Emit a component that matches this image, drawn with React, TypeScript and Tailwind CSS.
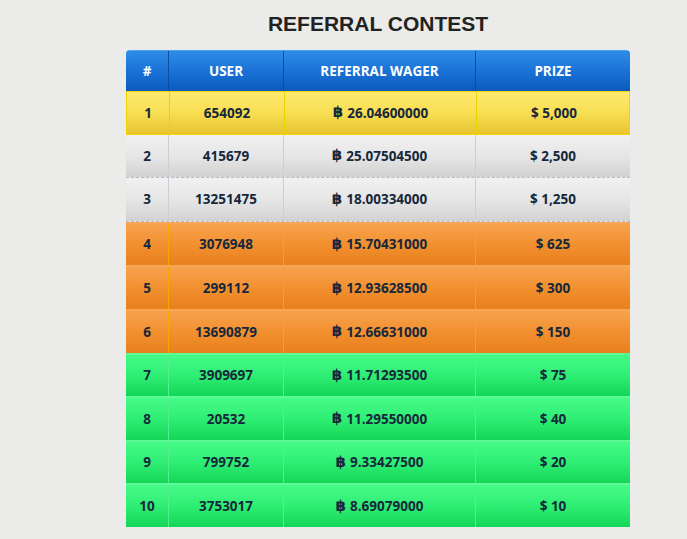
const rows = [
  { rank: 1, user: '654092', wager: '26.04600000', prize: '$ 5,000', tier: 'gold' },
  { rank: 2, user: '415679', wager: '25.07504500', prize: '$ 2,500', tier: 'silver' },
  { rank: 3, user: '13251475', wager: '18.00334000', prize: '$ 1,250', tier: 'silver' },
  { rank: 4, user: '3076948', wager: '15.70431000', prize: '$ 625', tier: 'orange' },
  { rank: 5, user: '299112', wager: '12.93628500', prize: '$ 300', tier: 'orange' },
  { rank: 6, user: '13690879', wager: '12.66631000', prize: '$ 150', tier: 'orange' },
  { rank: 7, user: '3909697', wager: '11.71293500', prize: '$ 75', tier: 'green' },
  { rank: 8, user: '20532', wager: '11.29550000', prize: '$ 40', tier: 'green' },
  { rank: 9, user: '799752', wager: '9.33427500', prize: '$ 20', tier: 'green' },
  { rank: 10, user: '3753017', wager: '8.69079000', prize: '$ 10', tier: 'green' },
];

const rowStyles: Record<string, { row: string; cell: string }> = {
  gold: {
    row: 'bg-gradient-to-b from-[#fdea6e] via-[#f8de52] to-[#e7c42c] border border-[#f2d400]',
    cell: 'border-[#e6d600]',
  },
  silver: {
    row: 'bg-gradient-to-b from-[#f1f1f1] via-[#e6e6e6] to-[#d2d2d2] border-b border-dashed border-[#b4bccb]',
    cell: 'border-[#c9ced8]',
  },
  orange: {
    row: 'bg-gradient-to-b from-[#f7a24d] via-[#f2902f] to-[#e8801d] border-t-2 border-[#f8a654]',
    cell: 'border-[#f7a800]',
  },
  green: {
    row: 'bg-gradient-to-b from-[#45fb88] via-[#2eee74] to-[#13d657] border-t-2 border-[#5dfb98]',
    cell: 'border-[#58ec8e]',
  },
};

const cols = 'grid grid-cols-[42px_115px_192px_155px]';

export default function App() {
  return (
    <div className="min-h-[539px] w-[687px] bg-[#ebebea] font-['Open_Sans','DejaVu_Sans',sans-serif]">
      <div className="ml-[126px] w-[504px] pt-[11px]">
        <h1 className="text-center text-[21px] leading-[26px] font-bold text-[#222222] font-['Liberation_Sans',Arial,sans-serif] h-[39px]">
          REFERRAL CONTEST
        </h1>
        <div className="overflow-hidden rounded-t-[4px]">
          <div className={`${cols} h-[41px] bg-gradient-to-b from-[#2e8ce6] via-[#1a72d6] to-[#0b5abd] border-t border-[#4ea0f0] text-white text-[13.5px] font-bold`}>
            {['#', 'USER', 'REFERRAL WAGER', 'PRIZE'].map((h, i) => (
              <div
                key={h}
                className={`flex items-center justify-center ${i > 0 ? 'border-l border-[#0b4ea6]' : ''}`}
              >
                {h}
              </div>
            ))}
          </div>
          {rows.map((r) => {
            const s = rowStyles[r.tier];
            return (
              <div
                key={r.rank}
                className={`${cols} h-[43.6px] text-[13.5px] font-bold text-[#16283b] ${s.row}`}
              >
                <div className="flex items-center justify-center">{r.rank}</div>
                <div className={`flex items-center justify-center border-l ${s.cell}`}>{r.user}</div>
                <div className={`flex items-center justify-center border-l ${s.cell}`}>
                  <span className="font-['DejaVu_Sans',sans-serif] text-[15px] leading-none mr-[4px]">฿</span>
                  {r.wager}
                </div>
                <div className={`flex items-center justify-center border-l ${s.cell}`}>{r.prize}</div>
              </div>
            );
          })}
        </div>
      </div>
    </div>
  );
}
